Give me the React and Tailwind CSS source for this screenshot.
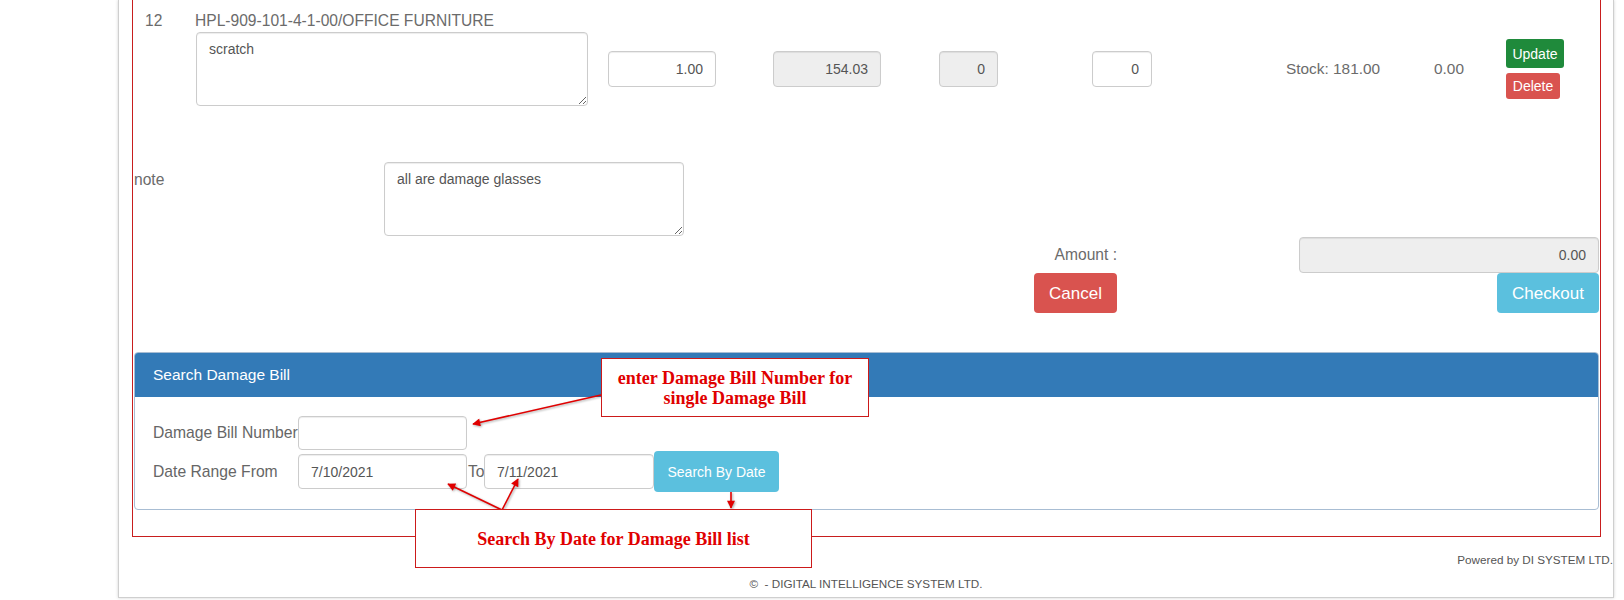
import React from "react";

const inputCls =
  "border border-[#ccc] rounded-[4px] px-3 text-[14px] text-[#555] shadow-[inset_0_1px_1px_rgba(0,0,0,0.075)] outline-none bg-white";
const disabledCls =
  "border border-[#ccc] rounded-[4px] px-3 text-[14px] text-[#555] shadow-[inset_0_1px_1px_rgba(0,0,0,0.075)] outline-none bg-[#eee]";

export default function App() {
  return (
    <div className="relative w-[1624px] h-[600px] overflow-hidden bg-white font-['Liberation_Sans',Arial,sans-serif]">
      {/* page container */}
      <div className="ml-[118px] w-[1496px] h-[598px] border-x border-b border-[#cfcfcf] shadow-[0_0_3px_rgba(0,0,0,0.18)] flex flex-col">
        {/* red annotation frame */}
        <div className="ml-[13px] mr-[12px] border-x border-b border-[#c81e1e] pb-[26px]">
          {/* item row */}
          <div className="flex pt-[11px] pl-[12px] text-[15.6px] leading-[20px] text-[#6b6b6b]">
            <div className="w-[50px]">12</div>
            <div className="flex flex-col">
              <div>HPL-909-101-4-1-00/OFFICE FURNITURE</div>
              <div className="flex items-center mt-[1px]">
                <textarea
                  readOnly
                  defaultValue="scratch"
                  className={inputCls + " ml-[1px] w-[392px] h-[74px] py-[6px] leading-[20px]"}
                />
                <input readOnly value="1.00" className={inputCls + " ml-[20px] w-[108px] h-[36px] text-right"} />
                <input readOnly value="154.03" className={disabledCls + " ml-[57px] w-[108px] h-[36px] text-right"} />
                <input readOnly value="0" className={disabledCls + " ml-[58px] w-[59px] h-[36px] text-right"} />
                <input readOnly value="0" className={inputCls + " ml-[94px] w-[60px] h-[36px] text-right"} />
                <div className="ml-[134px] w-[148px] text-[15.4px]">Stock: 181.00</div>
                <div className="w-[72px] text-[15.4px]">0.00</div>
                <div className="flex flex-col gap-[5px]">
                  <button className="w-[58px] h-[29px] rounded-[3px] bg-[#1f8a3b] text-white text-[14px] leading-none">
                    Update
                  </button>
                  <button className="w-[54px] h-[26px] rounded-[3px] bg-[#d9534f] text-white text-[14px] leading-none">
                    Delete
                  </button>
                </div>
              </div>
            </div>
          </div>

          {/* note row */}
          <div className="flex items-start mt-[56px]">
            <div className="w-[251px] pl-[1px] pt-[8px] text-[15.6px] leading-[20px] text-[#6b6b6b]">note</div>
            <textarea
              readOnly
              defaultValue="all are damage glasses"
              className={inputCls + " w-[300px] h-[74px] py-[6px] leading-[20px]"}
            />
          </div>

          {/* amount block */}
          <div className="flex justify-end mt-[1px]">
            <div className="h-[36px] flex items-center text-[15.6px] text-[#6b6b6b]">Amount :</div>
            <input readOnly value="0.00" className={disabledCls + " ml-[182px] mr-[1px] w-[300px] h-[36px] text-right"} />
          </div>
          <div className="flex justify-end">
            <button className="w-[83px] h-[40px] rounded-[4px] bg-[#d9534f] text-white text-[17px] leading-none">
              Cancel
            </button>
            <div className="ml-[182px] mr-[1px] w-[300px] flex justify-end">
              <button className="w-[102px] h-[40px] rounded-[4px] bg-[#5bc0de] text-white text-[17px] leading-none">
                Checkout
              </button>
            </div>
          </div>

          {/* search panel */}
          <div className="mt-[39px] mx-[1px] border border-[#a8bdd3] rounded-[4px]">
            <div className="h-[44px] bg-[#337ab7] rounded-t-[3px] flex items-center pl-[18px] text-white text-[15.5px]">
              Search Damage Bill
            </div>
            <div className="pl-[18px] pt-[19px] pb-[17px] text-[15.7px] text-[#666]">
              <div className="flex items-center h-[34px]">
                <div className="w-[145px] whitespace-nowrap">Damage Bill Number</div>
                <input readOnly value="" className={inputCls + " w-[169px] h-[34px]"} />
              </div>
              <div className="flex items-center mt-[1px]">
                <div className="w-[145px]">Date Range From</div>
                <input readOnly value="7/10/2021" className={inputCls + " w-[169px] h-[35px]"} />
                <div className="w-[17px] pl-[1px]">To</div>
                <input readOnly value="7/11/2021" className={inputCls + " w-[170px] h-[35px]"} />
                <button className="w-[125px] h-[41px] rounded-[4px] bg-[#5bc0de] text-white text-[14px] leading-none">
                  Search By Date
                </button>
              </div>
            </div>
          </div>
        </div>

        {/* footer */}
        <div className="mt-[14px] text-right text-[11.7px] leading-[17px] text-[#555]">Powered by DI SYSTEM LTD.</div>
        <div className="mt-[7px] text-center text-[11.7px] leading-[17px] text-[#555]">©&nbsp; - DIGITAL INTELLIGENCE SYSTEM LTD.</div>
      </div>

      {/* arrows overlay */}
      <svg
        className="absolute left-0 top-0 pointer-events-none drop-shadow-[1px_1px_1px_rgba(0,0,0,0.35)]"
        width="1624"
        height="600"
      >
        <defs>
          <marker
            id="ah"
            viewBox="0 0 10 10"
            refX="9"
            refY="5"
            markerWidth="11"
            markerHeight="8"
            orient="auto"
            markerUnits="userSpaceOnUse"
          >
            <path d="M0,0 L10,5 L0,10 z" fill="#e00000" />
          </marker>
        </defs>
        <line x1="601" y1="395" x2="473" y2="424" stroke="#e00000" strokeWidth="1.6" markerEnd="url(#ah)" />
        <line x1="502" y1="510" x2="448" y2="484" stroke="#e00000" strokeWidth="1.6" markerEnd="url(#ah)" />
        <line x1="502" y1="510" x2="518" y2="479" stroke="#e00000" strokeWidth="1.6" markerEnd="url(#ah)" />
        <line x1="731" y1="492" x2="731" y2="508" stroke="#e00000" strokeWidth="1.6" markerEnd="url(#ah)" />
      </svg>

      {/* annotation boxes */}
      <div className="absolute left-[601px] top-[358px] w-[268px] h-[59px] bg-white border border-[#cc1a1a] flex items-center justify-center text-center font-['Liberation_Serif','Times_New_Roman',serif] font-bold text-[18px] leading-[20px] text-[#e00000]">
        <div>
          enter Damage Bill Number for
          <br />
          single Damage Bill
        </div>
      </div>
      <div className="absolute left-[415px] top-[509px] w-[397px] h-[59px] bg-white border border-[#cc1a1a] flex items-center justify-center font-['Liberation_Serif','Times_New_Roman',serif] font-bold text-[18px] leading-[20px] text-[#e00000]">
        Search By Date for Damage Bill list
      </div>
    </div>
  );
}
